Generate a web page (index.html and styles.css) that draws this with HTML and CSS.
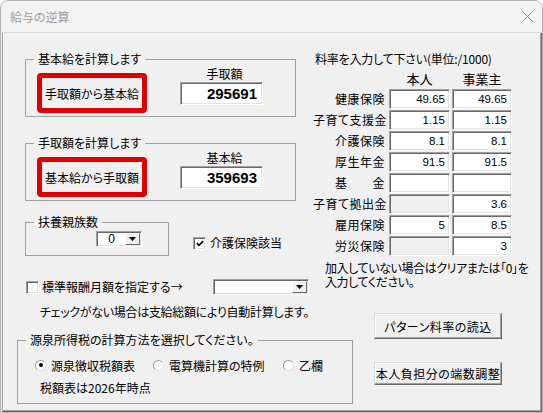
FILE: index.html
```html
<!DOCTYPE html>
<html lang="ja">

<head>
    <meta charset="UTF-8">
    <meta name="viewport" content="width=device-width, initial-scale=1.0">
    <title>給与の逆算</title>
    <link rel="stylesheet" href="styles.css">
</head>

<body>
    <div class="window">
        <!-- タイトルバー -->
        <div class="titlebar">
            <span class="title">給与の逆算</span>
            <svg class="close" width="11" height="11" viewBox="0 0 11 11">
                <path d="M0.5 0.5L10.5 10.5M10.5 0.5L0.5 10.5" stroke="#8a8a8a" stroke-width="1" fill="none" />
            </svg>
        </div>

        <div class="client">
            <!-- 左側：計算ボタンと条件 -->
            <div class="left">
                <fieldset class="group calc">
                    <legend>基本給を計算します</legend>
                    <div class="group-body calc-body">
                        <div class="red-btn">手取額から基本給</div>
                        <div class="amount">
                            <span class="amount-label">手取額</span>
                            <div class="sunken amount-box">295691</div>
                        </div>
                    </div>
                </fieldset>

                <fieldset class="group calc second">
                    <legend>手取額を計算します</legend>
                    <div class="group-body calc-body">
                        <div class="red-btn">基本給から手取額</div>
                        <div class="amount">
                            <span class="amount-label">基本給</span>
                            <div class="sunken amount-box">359693</div>
                        </div>
                    </div>
                </fieldset>

                <div class="dep-row">
                    <fieldset class="group dep">
                        <legend>扶養親族数</legend>
                        <div class="group-body dep-body">
                            <div class="sunken combo small">
                                <span class="combo-text">0</span>
                                <span class="combo-btn"><svg width="7" height="4" viewBox="0 0 7 4"><path d="M0 0H7L3.5 4Z" fill="#000" /></svg></span>
                            </div>
                        </div>
                    </fieldset>
                    <label class="check-label care">
                        <span class="check"><svg width="8" height="7" viewBox="0 0 8 7"><path d="M0.8 3.2L3 5.4L7.2 1" stroke="#000" stroke-width="1.7" fill="none" /></svg></span>
                        介護保険該当
                    </label>
                </div>

                <div class="std-row">
                    <span class="check"></span>
                    <span class="std-text">標準報酬月額を指定する→</span>
                    <div class="sunken combo wide">
                        <span class="combo-text"></span>
                        <span class="combo-btn"><svg width="7" height="4" viewBox="0 0 7 4"><path d="M0 0H7L3.5 4Z" fill="#000" /></svg></span>
                    </div>
                </div>
                <p class="auto-note">チェックがない場合は支給総額により自動計算します。</p>

                <fieldset class="group tax">
                    <legend>源泉所得税の計算方法を選択してください。</legend>
                    <div class="group-body tax-body">
                        <div class="radio-row">
                            <span class="radio r1"><span class="dot on"></span>源泉徴収税額表</span>
                            <span class="radio r2"><span class="dot"></span>電算機計算の特例</span>
                            <span class="radio"><span class="dot"></span>乙欄</span>
                        </div>
                        <p class="tax-note">税額表は2026年時点</p>
                    </div>
                </fieldset>
            </div>

            <!-- 右側：保険料率 -->
            <div class="right">
                <p class="rate-head">料率を入力して下さい(単位:/1000)</p>
                <div class="colheads">
                    <span></span>
                    <span>本人</span>
                    <span>事業主</span>
                </div>
                <div class="rates">
                    <span class="rate-label">健康保険</span>
                    <span class="sunken rate">49.65</span>
                    <span class="sunken rate">49.65</span>

                    <span class="rate-label">子育て支援金</span>
                    <span class="sunken rate">1.15</span>
                    <span class="sunken rate">1.15</span>

                    <span class="rate-label">介護保険</span>
                    <span class="sunken rate">8.1</span>
                    <span class="sunken rate">8.1</span>

                    <span class="rate-label">厚生年金</span>
                    <span class="sunken rate">91.5</span>
                    <span class="sunken rate">91.5</span>

                    <span class="rate-label">基　　金</span>
                    <span class="sunken rate"></span>
                    <span class="sunken rate"></span>

                    <span class="rate-label">子育て拠出金</span>
                    <span class="sunken rate off"></span>
                    <span class="sunken rate">3.6</span>

                    <span class="rate-label">雇用保険</span>
                    <span class="sunken rate">5</span>
                    <span class="sunken rate">8.5</span>

                    <span class="rate-label">労災保険</span>
                    <span class="sunken rate off"></span>
                    <span class="sunken rate">3</span>
                </div>
                <p class="rate-note">加入していない場合はクリアまたは「0」を</p>
                <p class="rate-note">入力してください。</p>

                <button class="btn load">パターン料率の読込</button>
                <button class="btn round">本人負担分の端数調整</button>
            </div>
        </div>
    </div>
</body>

</html>
```

FILE: styles.css
```css
/* 全体 */
body {
    margin: 0;
    background: #fff;
    font-family: "Noto Sans CJK JP", sans-serif;
    font-size: 12px;
    font-feature-settings: "palt";
    color: #000;
}

p {
    margin: 0;
    white-space: nowrap;
}

/* ウィンドウ枠 */
.window {
    width: 543px;
    height: 413px;
    box-sizing: border-box;
    border: 1px solid #b4b4b4;
    border-radius: 8px 8px 0 0;
    background: #f0f0f0;
    display: flex;
    flex-direction: column;
    overflow: hidden;
}

.titlebar {
    height: 32px;
    flex: none;
    box-sizing: border-box;
    background: #f3f3f3;
    border-bottom: 1px solid #dcdcdc;
    display: flex;
    align-items: center;
    justify-content: space-between;
    padding: 0 9px;
}

.title {
    color: #9d9d9d;
}

.client {
    flex: 1;
    min-height: 0;
    display: flex;
    margin-left: 1px;
    padding: 19px 0 0 14px;
    border-left: 1px solid #a0a0a0;
    border-right: 1px solid #696969;
    border-bottom: 1px solid #696969;
    box-shadow: inset -1px -1px 0 #a0a0a0;
}

.left {
    width: 296px;
    flex: none;
    display: flex;
    flex-direction: column;
}

.right {
    flex: 1;
    display: flex;
    flex-direction: column;
    align-items: flex-start;
}

/* グループ枠 */
.group {
    margin: 0;
    padding: 0;
    border: 1px solid #a0a0a0;
    min-width: 0;
    box-sizing: border-box;
    flex: none;
}

.group legend {
    margin-left: 8px;
    padding: 0 4px;
    line-height: 14px;
    height: 14px;
    white-space: nowrap;
}

.group-body {
    display: flex;
}

/* 3D のへこみ枠 */
.sunken {
    box-sizing: border-box;
    background: #fff;
    border: 1px solid;
    border-color: #a0a0a0 #fff #fff #a0a0a0;
    box-shadow: inset 1px 1px 0 #696969, inset -1px -1px 0 #e3e3e3;
}

/* 基本給・手取額 */
.calc {
    margin-left: 8px;
    width: 271px;
}

.calc.second {
    margin-top: 19px;
}

.calc-body {
    padding: 0 0 3px 11px;
}

.red-btn {
    margin-top: 7px;
    width: 110px;
    height: 40px;
    box-sizing: border-box;
    border: 5px solid #e00000;
    border-radius: 4px;
    display: flex;
    align-items: center;
    justify-content: center;
    white-space: nowrap;
}

.amount {
    margin-left: 33px;
    display: flex;
    flex-direction: column;
    align-items: center;
}

.amount-label {
    line-height: 16px;
    padding-left: 6px;
}

.amount-box {
    width: 83px;
    height: 23px;
    padding-right: 5px;
    text-align: right;
    font: bold 15px/21px "Liberation Sans", sans-serif;
}

/* 扶養親族数 */
.dep-row {
    display: flex;
    align-items: flex-start;
    margin-top: 14px;
    flex: none;
}

.dep {
    margin-left: 8px;
    width: 144px;
}

.dep-body {
    padding: 2px 0 8px 70px;
}

.combo {
    display: flex;
    height: 16px;
    padding: 1px;
}

.combo.small {
    width: 46px;
}

.combo.wide {
    width: 96px;
    margin-left: auto;
}

.combo-text {
    flex: 1;
    text-align: center;
    font: 12px/12px "Liberation Sans", sans-serif;
}

.combo-btn {
    width: 15px;
    box-sizing: border-box;
    background: #f0f0f0;
    border: 1px solid;
    border-color: #fff #696969 #696969 #fff;
    display: flex;
    align-items: center;
    justify-content: center;
}

/* チェックボックス */
.check {
    width: 13px;
    height: 13px;
    flex: none;
    box-sizing: border-box;
    background: #fff;
    border: 1px solid;
    border-color: #a0a0a0 #fff #fff #a0a0a0;
    box-shadow: inset 1px 1px 0 #696969, inset -1px -1px 0 #e3e3e3;
    display: flex;
    align-items: center;
    justify-content: center;
}

.check-label {
    display: flex;
    align-items: center;
    gap: 4px;
    line-height: 14px;
    white-space: nowrap;
}

.care {
    margin: 21px 0 0 24px;
}

.std-row {
    display: flex;
    align-items: center;
    height: 16px;
    flex: none;
    margin: 23px 4px 0 9px;
}

.std-text {
    margin-left: 3px;
    line-height: 14px;
    white-space: nowrap;
}

.auto-note {
    margin: 10px 0 0 23px;
    line-height: 14px;
    height: 14px;
    letter-spacing: -0.3px;
}

/* 源泉所得税 */
.tax {
    margin-top: 14px;
    width: 336px;
}

.tax-body {
    flex-direction: column;
    padding: 10px 0 8px 17px;
}

.radio-row {
    display: flex;
    height: 16px;
    align-items: center;
    white-space: nowrap;
}

.radio {
    display: flex;
    align-items: center;
    gap: 5px;
}

.radio.r1 {
    width: 118px;
}

.radio.r2 {
    width: 130px;
}

.dot {
    width: 11px;
    height: 11px;
    box-sizing: border-box;
    border-radius: 50%;
    background: #fff;
    border: 1px solid;
    border-color: #9a9a9a #e3e3e3 #e3e3e3 #9a9a9a;
    display: flex;
    align-items: center;
    justify-content: center;
}

.dot.on::after {
    content: "";
    width: 4px;
    height: 4px;
    border-radius: 50%;
    background: #000;
}

.tax-note {
    margin: 8px 0 0 5px;
    line-height: 14px;
}

/* 料率表 */
.rate-head {
    padding-left: 2px;
    line-height: 14px;
    letter-spacing: -0.2px;
}

.colheads,
.rates {
    display: grid;
    grid-template-columns: 74px 61px 60px;
    column-gap: 2px;
}

.colheads {
    margin-top: 6px;
    line-height: 14px;
    font-size: 13px;
    text-align: center;
}

.rates {
    margin-top: 3px;
    row-gap: 1px;
    grid-auto-rows: 20px;
}

.rate-label {
    text-align: right;
    padding-right: 2px;
    line-height: 20px;
    letter-spacing: 0.5px;
    white-space: nowrap;
}

.rate {
    padding-right: 4px;
    text-align: right;
    font: 11.5px/18px "Liberation Sans", sans-serif;
}

.rate.off {
    background: #f0f0f0;
}

/* 2 行の注意書き */
.rate-note {
    margin-left: 12px;
    line-height: 14px;
    height: 14px;
    letter-spacing: -0.4px;
}

.rates + .rate-note {
    margin-top: 5px;
}

/* ボタン */
.btn {
    margin-left: 61px;
    width: 128px;
    box-sizing: border-box;
    padding: 0;
    background: #f0f0f0;
    font: inherit;
    letter-spacing: 0.5px;
    color: #000;
    border: 1px solid;
    border-color: #dcdcdc #696969 #696969 #dcdcdc;
    box-shadow: inset -1px -1px 0 #a0a0a0, inset 1px 1px 0 #fff;
}

.btn.load {
    margin-top: 24px;
    height: 26px;
}

.btn.round {
    margin-top: 23px;
    height: 23px;
}
```
